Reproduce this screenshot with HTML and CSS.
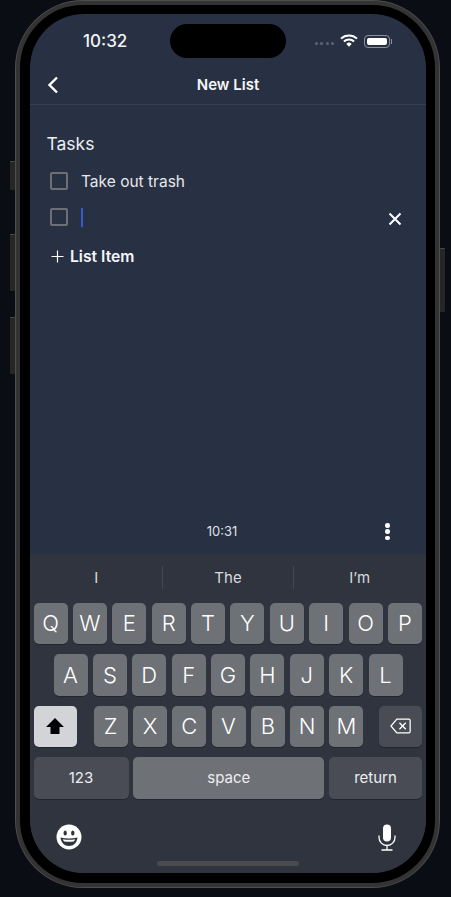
FILE: index.html
```html
<!DOCTYPE html>
<html lang="en">

<head>
    <meta charset="UTF-8">
    <meta name="viewport" content="width=device-width, initial-scale=1.0">
    <title>New List</title>
    <link rel="stylesheet" href="styles.css">
</head>

<body>
    <div class="phone">
        <span class="side-btn btn-silent"></span>
        <span class="side-btn btn-up"></span>
        <span class="side-btn btn-down"></span>
        <span class="side-btn btn-power"></span>
        <div class="island"></div>

        <div class="screen">
            <div class="status-bar">
                <span class="clock">10:32</span>
                <div class="status-icons">
                    <span class="signal"><i></i><i></i><i></i><i></i></span>
                    <svg class="wifi" width="18" height="13" viewBox="0 0 18 13">
                        <path d="M1 4.600a11.600 11.600 0 0 1 16 0" fill="none" stroke="#fff" stroke-width="2" />
                        <path d="M3.900 7.500a7.400 7.400 0 0 1 10.200 0" fill="none" stroke="#fff" stroke-width="2" />
                        <path d="M6.300 9.900a3.800 3.800 0 0 1 5.400 0L9 12.800z" fill="#fff" />
                    </svg>
                    <span class="battery"><i></i></span>
                </div>
            </div>

            <div class="nav-bar">
                <svg class="back" width="12" height="18" viewBox="0 0 12 18">
                    <path d="M10 1.500 2.500 9l7.500 7.500" fill="none" stroke="#fff" stroke-width="2.400" />
                </svg>
                <span class="nav-title">New List</span>
            </div>

            <div class="content">
                <h2 class="list-title">Tasks</h2>
                <div class="task">
                    <span class="check"></span>
                    <span class="task-text">Take out trash</span>
                </div>
                <div class="task task-active">
                    <span class="check"></span>
                    <span class="caret"></span>
                    <svg class="remove" width="14" height="14" viewBox="0 0 14 14">
                        <path d="M1.500 1.500l11 11M12.500 1.500l-11 11" fill="none" stroke="#fff" stroke-width="2" />
                    </svg>
                </div>
                <div class="add-item">
                    <svg width="13" height="13" viewBox="0 0 13 13">
                        <path d="M6.500 0.500v12M0.500 6.500h12" fill="none" stroke="#fff" stroke-width="1.200" />
                    </svg>
                    <span>List Item</span>
                </div>
            </div>

            <div class="footer">
                <span class="edited">10:31</span>
                <span class="dots"><i></i><i></i><i></i></span>
            </div>

            <div class="keyboard">
                <div class="suggestions">
                    <span>I</span>
                    <span>The</span>
                    <span>I’m</span>
                </div>
                <div class="key-row">
                    <span class="key">Q</span><span class="key">W</span><span class="key">E</span><span class="key">R</span><span class="key">T</span><span class="key">Y</span><span class="key">U</span><span class="key">I</span><span class="key">O</span><span class="key">P</span>
                </div>
                <div class="key-row row-two">
                    <span class="key">A</span><span class="key">S</span><span class="key">D</span><span class="key">F</span><span class="key">G</span><span class="key">H</span><span class="key">J</span><span class="key">K</span><span class="key">L</span>
                </div>
                <div class="key-row row-three">
                    <span class="key key-shift">
                        <svg width="20" height="18" viewBox="0 0 20 18">
                            <path d="M10 1 19 10h-4.500v7h-9v-7H1z" fill="#000" />
                        </svg>
                    </span>
                    <div class="letters">
                        <span class="key">Z</span><span class="key">X</span><span class="key">C</span><span class="key">V</span><span class="key">B</span><span class="key">N</span><span class="key">M</span>
                    </div>
                    <span class="key key-delete">
                        <svg width="21" height="16" viewBox="0 0 20 15">
                            <path d="M6.500 1H18a1.200 1.200 0 0 1 1.200 1.200v10.600A1.200 1.200 0 0 1 18 14H6.500L.9 7.500z" fill="none" stroke="#fff" stroke-width="1.200" />
                            <path d="M9 4.500l6 6M15 4.500l-6 6" fill="none" stroke="#fff" stroke-width="1.300" />
                        </svg>
                    </span>
                </div>
                <div class="key-row row-four">
                    <span class="key key-dark key-num">123</span>
                    <span class="key key-space">space</span>
                    <span class="key key-dark key-return">return</span>
                </div>
                <div class="kb-bottom">
                    <svg width="26" height="26" viewBox="0 0 26 26">
                        <circle cx="13" cy="13" r="12.500" fill="#fff" />
                        <ellipse cx="9.200" cy="9" rx="1.700" ry="2.500" fill="#30343e" />
                        <ellipse cx="16.800" cy="9" rx="1.700" ry="2.500" fill="#30343e" />
                        <path d="M4.500 13.500c5.500 1.300 11.500 1.300 17 0-.5 5-4 8.500-8.500 8.500s-8-3.500-8.500-8.500z" fill="#30343e" />
                        <path d="M6.800 15.200c4 .7 8.400 .7 12.400 0-.6 1.300-1 1.800-1.600 2.300-3 .4-6.200 .4-9.200 0-.6-.5-1.100-1-1.600-2.300z" fill="#fff" />
                    </svg>
                    <svg width="18" height="27" viewBox="0 0 18 27">
                        <rect x="5" y="0.500" width="8" height="17" rx="4" fill="#fff" />
                        <path d="M1 11.500v2a8 8 0 0 0 16 0v-2M9 21.500v4.500M3.500 26h11" fill="none" stroke="#fff" stroke-width="1.300" />
                    </svg>
                </div>
                <div class="home-bar"></div>
            </div>
        </div>
    </div>
</body>

</html>
```

FILE: styles.css
```css
* {
    box-sizing: border-box;
}

body {
    margin: 0;
    width: 451px;
    height: 897px;
    overflow: hidden;
    background: #0a0d13;
    font-family: Inter, 'Liberation Sans', sans-serif;
    color: #fff;
}

.phone {
    position: relative;
    width: 423px;
    height: 886px;
    margin: 1px 0 0 16px;
    padding: 9px 9px 9px 10px;
    background: #000;
    border: 4px solid #333334;
    border-radius: 67px;
    box-shadow: 0 0 0 1px #4e4e50;
}

.side-btn {
    position: absolute;
    width: 5px;
    background: #262627;
    border-top: 1px solid #4a4a4b;
    border-radius: 1px;
}

.btn-silent {
    left: -10px;
    top: 156px;
    height: 29px;
}

.btn-up {
    left: -10px;
    top: 229px;
    height: 57px;
}

.btn-down {
    left: -10px;
    top: 312px;
    height: 57px;
}

.btn-power {
    right: -10px;
    top: 243px;
    height: 64px;
}

.island {
    position: absolute;
    top: 19px;
    left: 150px;
    width: 116px;
    height: 34px;
    background: #000;
    border-radius: 17px;
    z-index: 2;
}

.screen {
    display: flex;
    flex-direction: column;
    width: 396px;
    height: 859px;
    overflow: hidden;
    background: #283043;
    border-radius: 54px;
}

/* status bar */
.status-bar {
    display: flex;
    justify-content: space-between;
    align-items: center;
    height: 54px;
    padding: 0 36px 0 53px;
}

.clock {
    font-size: 17px;
    font-weight: 500;
    color: #f2f3f5;
}

.status-icons {
    display: flex;
    align-items: center;
    gap: 6px;
}

.signal {
    display: flex;
    gap: 2.500px;
    margin-top: 4px;
}

.signal i {
    width: 3px;
    height: 3px;
    border-radius: 50%;
    background: #5c6371;
}

.wifi {
    margin-top: -2px;
}

.battery {
    display: block;
    position: relative;
    width: 26px;
    height: 13px;
    padding: 2px;
    border: 1px solid #8b909b;
    border-radius: 4px;
}

.battery i {
    display: block;
    height: 100%;
    background: #fff;
    border-radius: 2px;
}

.battery::after {
    content: '';
    position: absolute;
    right: -3px;
    top: 3px;
    width: 1px;
    height: 5px;
    background: #8b909b;
}

/* nav */
.nav-bar {
    position: relative;
    display: flex;
    justify-content: center;
    align-items: center;
    height: 37px;
    padding-bottom: 4px;
    border-bottom: 1px solid #353e52;
}

.back {
    position: absolute;
    left: 17px;
    top: 8px;
}

.nav-title {
    font-size: 15px;
    font-weight: 600;
    color: #f5f6f8;
}

/* list */
.content {
    flex: 1;
    padding: 26px 17px 0 16.500px;
}

.list-title {
    margin: 0 0 6px;
    font-size: 17.500px;
    line-height: 26px;
    font-weight: 400;
    color: #eceef1;
}

.task {
    display: flex;
    align-items: center;
    height: 36px;
    padding-left: 3.500px;
}

.check {
    width: 18px;
    height: 18px;
    margin-right: 13px;
    border: 2px solid #6d6f74;
    border-radius: 2px;
}

.task-text {
    font-size: 15.500px;
    color: #e6e8ec;
}

.caret {
    width: 2px;
    height: 19px;
    background: #3a5bc7;
}

.remove {
    margin-left: auto;
    margin-top: 4px;
    margin-right: 7px;
}

.add-item {
    display: flex;
    align-items: center;
    gap: 6px;
    margin-top: 11.500px;
    padding-left: 4.500px;
    font-size: 15.700px;
    font-weight: 600;
    color: #f5f6f8;
}

.footer {
    position: relative;
    display: flex;
    justify-content: center;
    align-items: center;
    height: 46px;
    padding: 0 12px 0 0;
}

.edited {
    font-size: 13px;
    color: #dfe1e6;
}

.dots {
    position: absolute;
    right: 36.500px;
    top: 15px;
    display: flex;
    flex-direction: column;
    gap: 1.750px;
}

.dots i {
    width: 4.500px;
    height: 4.500px;
    border-radius: 50%;
    background: #fff;
}

/* keyboard */
.keyboard {
    display: flex;
    flex-direction: column;
    gap: 10px;
    height: 319px;
    padding: 0 4px 0 3.500px;
    background: #30343e;
}

.suggestions {
    display: flex;
    height: 39.500px;
    margin: 0 -3px -1px -4.500px;
    padding-top: 12px;
}

.suggestions span {
    flex: 1;
    height: 23px;
    text-align: center;
    font-size: 15px;
    line-height: 24px;
    color: #d8dadf;
    border-left: 1px solid #42464f;
}

.suggestions span:first-child {
    border-left: 0;
    padding-left: 2px;
}

.key-row {
    display: flex;
    justify-content: space-between;
    height: 41.500px;
}

.row-two {
    padding: 0 19.500px 0 20px;
}

.letters {
    display: flex;
    gap: 5.300px;
    margin: 0 16px 0 17px;
}

.key {
    display: flex;
    justify-content: center;
    align-items: center;
    width: 34px;
    height: 41.500px;
    background: #6e7175;
    border-radius: 5px;
    box-shadow: 0 1px 0 #23262d;
    font-size: 22px;
    font-weight: 300;
}

.key-shift {
    width: 43.500px;
    background: #d3d4d7;
}

.key-delete {
    width: 43px;
    background: #494c54;
}

.key-dark {
    background: #494c54;
    font-size: 15px;
    font-weight: 400;
    color: #eceef1;
}

.key-num {
    width: 95px;
}

.key-return {
    width: 93px;
}

.key-space {
    width: 191px;
    padding-bottom: 1px;
    font-size: 15px;
    font-weight: 400;
    color: #eceef1;
}

.kb-bottom {
    display: flex;
    justify-content: space-between;
    align-items: center;
    margin-top: 15px;
    padding: 0 26px 0 22px;
}

.home-bar {
    width: 142px;
    height: 5px;
    margin: 0 auto;
    background: #4a4c52;
    border-radius: 3px;
}
```
